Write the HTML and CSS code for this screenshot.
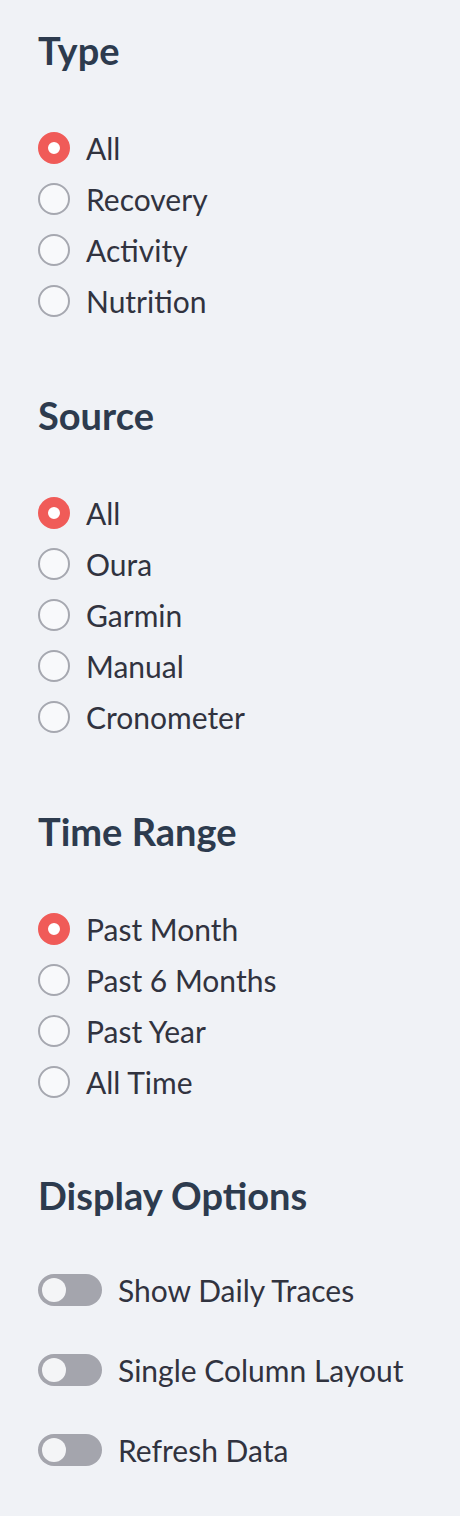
FILE: index.html
```html
<!DOCTYPE html>
<html>
<head>
<meta charset="utf-8">
<link rel="stylesheet" href="styles.css">
</head>
<body>
<aside class="sidebar">
  <section class="group">
    <h3 class="heading">Type</h3>
    <div class="radios">
      <label class="radio"><span class="dot checked"></span><span class="text">All</span></label>
      <label class="radio"><span class="dot"></span><span class="text">Recovery</span></label>
      <label class="radio"><span class="dot"></span><span class="text">Activity</span></label>
      <label class="radio"><span class="dot"></span><span class="text">Nutrition</span></label>
    </div>
  </section>
  <section class="group gap-a">
    <h3 class="heading">Source</h3>
    <div class="radios">
      <label class="radio"><span class="dot checked"></span><span class="text">All</span></label>
      <label class="radio"><span class="dot"></span><span class="text">Oura</span></label>
      <label class="radio"><span class="dot"></span><span class="text">Garmin</span></label>
      <label class="radio"><span class="dot"></span><span class="text">Manual</span></label>
      <label class="radio"><span class="dot"></span><span class="text">Cronometer</span></label>
    </div>
  </section>
  <section class="group gap-a">
    <h3 class="heading">Time Range</h3>
    <div class="radios">
      <label class="radio"><span class="dot checked"></span><span class="text">Past Month</span></label>
      <label class="radio"><span class="dot"></span><span class="text">Past 6 Months</span></label>
      <label class="radio"><span class="dot"></span><span class="text">Past Year</span></label>
      <label class="radio"><span class="dot"></span><span class="text">All Time</span></label>
    </div>
  </section>
  <section class="group gap-b">
    <h3 class="heading">Display Options</h3>
    <div class="toggles">
      <label class="toggle"><span class="switch"><span class="knob"></span></span><span class="text">Show Daily Traces</span></label>
      <label class="toggle"><span class="switch"><span class="knob"></span></span><span class="text">Single Column Layout</span></label>
      <label class="toggle"><span class="switch"><span class="knob"></span></span><span class="text">Refresh Data</span></label>
    </div>
  </section>
</aside>
</body>
</html>
```
FILE: styles.css
```css
html, body {
  margin: 0;
  padding: 0;
  background: #f0f2f6;
}
body {
  font-family: Lato, "Noto Sans", sans-serif;
  color: #31333f;
}
.sidebar {
  padding: 26px 38px 0 38px;
  display: flex;
  flex-direction: column;
}
.gap-a {
  margin-top: 65px;
}
.gap-b {
  margin-top: 64px;
}
.heading {
  margin: 0;
  font-size: 38px;
  line-height: 48px;
  font-weight: 700;
  color: #2d3b4e;
}
.radios {
  margin-top: 48px;
  display: flex;
  flex-direction: column;
}
.radio {
  height: 51px;
  display: flex;
  align-items: center;
  gap: 16px;
}
.dot {
  width: 32px;
  height: 32px;
  box-sizing: border-box;
  border-radius: 50%;
  border: 2px solid #a6a8b0;
  background: #f8f9fb;
  flex: none;
}
.dot.checked {
  border: 10px solid #f05b58;
  background: #ffffff;
}
.text {
  font-size: 30px;
  line-height: 40px;
}
.toggles {
  margin-top: 31px;
  display: flex;
  flex-direction: column;
}
.toggle {
  height: 80px;
  display: flex;
  align-items: center;
  gap: 16px;
}
.switch {
  width: 64px;
  height: 32px;
  border-radius: 16px;
  background: #a4a5ad;
  flex: none;
  display: flex;
  align-items: center;
  padding-left: 4px;
  box-sizing: border-box;
}
.knob {
  width: 24px;
  height: 24px;
  border-radius: 50%;
  background: #f4f5f7;
}
```
